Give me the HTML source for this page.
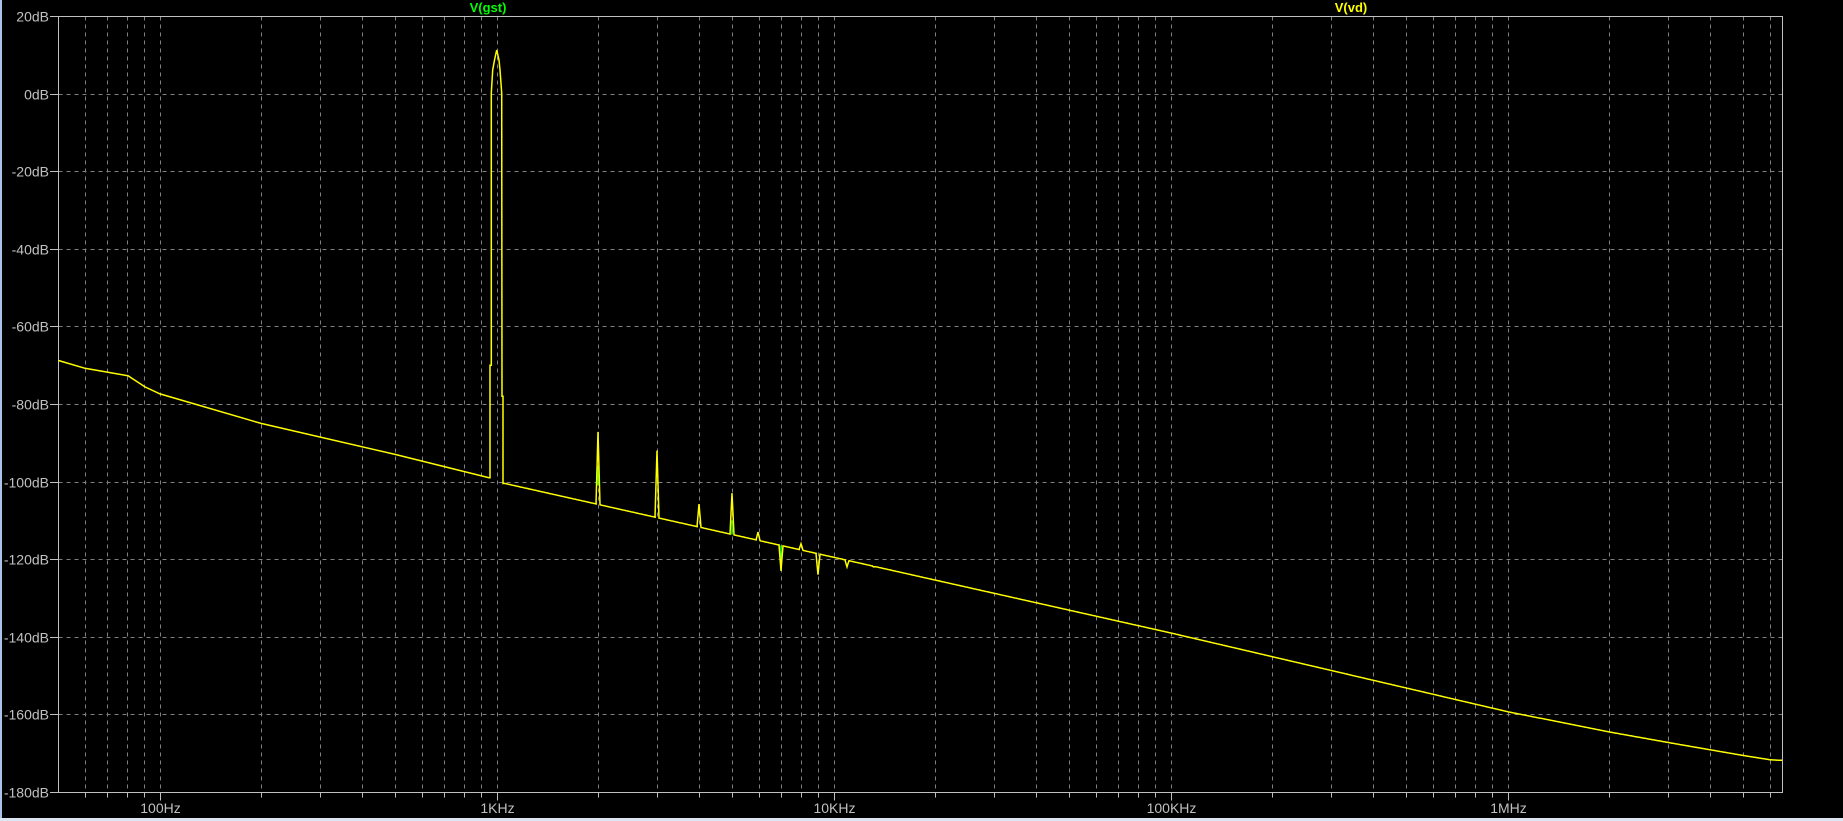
<!DOCTYPE html>
<html><head><meta charset="utf-8"><style>
html,body{margin:0;padding:0;background:#000;width:1843px;height:821px;overflow:hidden}
svg{display:block}
text{font-family:"Liberation Sans",sans-serif;font-size:14px;fill:#c0c0c0}
</style></head><body>
<svg id="s" width="1843" height="821" xmlns="http://www.w3.org/2000/svg">
<rect x="0" y="0" width="1843" height="821" fill="#000"/>
<rect x="0" y="0" width="2" height="821" fill="#a9c4e6"/>
<rect x="0" y="818" width="1843" height="3" fill="#dce6f2"/>
<g id="grid"></g>
<rect x="58.5" y="16.5" width="1724" height="776" fill="none" stroke="#c0c0c0" stroke-width="1"/>
<g id="lab"></g>
<text x="488" y="12" text-anchor="middle" style="fill:#00ff00;font-weight:bold;font-size:13px">V(gst)</text>
<text x="1351" y="12" text-anchor="middle" style="fill:#ffff00;font-weight:bold;font-size:13px">V(vd)</text>
<path id="g2" fill="none" stroke="#00ff00" stroke-width="1.5"/>
<path id="tr" fill="none" stroke="#ffff00" stroke-width="1.5"/>
</svg>
<script>
var L=58.5,R=1782.5,T=16.5,B=792.5;
function X(f){return 159.6+337*Math.log10(f/100);}
function Y(d){return 16+(20-d)*3.88;}
var g='',lab='';
for(var e=1;e<=6;e++){for(var m=1;m<=9;m++){var f=m*Math.pow(10,e);var x=Math.round(X(f))+0.5;if(x<=L||x>=R)continue;
g+='<line x1="'+x+'" y1="'+T+'" x2="'+x+'" y2="'+B+'" stroke="#808080" stroke-dasharray="4,4"/>';
g+='<line x1="'+x+'" y1="'+B+'" x2="'+x+'" y2="'+(B+(m==1?8:5))+'" stroke="#c0c0c0"/>';
if(m==1){var n=['','','100Hz','1KHz','10KHz','100KHz','1MHz'][e];lab+='<text x="'+x+'" y="813" text-anchor="middle">'+n+'</text>';}}}
for(var d=20;d>=-180;d-=20){var y=Math.round(Y(d))+0.5;
if(d<20&&d>-180)g+='<line x1="'+L+'" y1="'+y+'" x2="'+R+'" y2="'+y+'" stroke="#808080" stroke-dasharray="4,4"/>';
g+='<line x1="50" y1="'+y+'" x2="'+L+'" y2="'+y+'" stroke="#c0c0c0"/>';
lab+='<text x="49" y="'+(y+5)+'" text-anchor="end">'+d+'dB</text>';}
document.getElementById('grid').innerHTML=g;document.getElementById('lab').innerHTML=lab;
var pts=[[58.5,-68.8],[85,-70.8],[128,-72.7],[145,-75.6],[160,-77.4],[261,-85],[395,-93],[489,-99]];
var tab=[[3,-100],[4,-119.5],[5,-139],[6,-159.3],[6.3,-164.5],[6.5,-167.6],[6.7,-170.6],[6.78,-171.7],[6.9,-172.2]];
function base(x){
 var lf=2+(x-159.6)/337;
 for(var i=0;i<tab.length-1;i++){if(lf<=tab[i+1][0]){var a=tab[i],b=tab[i+1];return a[1]+(b[1]-a[1])*(lf-a[0])/(b[0]-a[0]);}}
 return tab[tab.length-1][1];}
var p='M'+pts.map(function(q){return q[0]+','+Y(q[1]).toFixed(1)}).join(' L');
p+=' L490,'+Y(-99)+' L490,'+Y(-70)+' L491.3,'+Y(-70)+' L491.3,93 L492.7,70 L494.5,60 L496.7,50 L499,60 L500,70 L501.7,93 L502,'+Y(-78)+' L503,'+Y(-78)+' L503,'+Y(-100.5);
var spikes={598:-87.2,657:-92,699:-105.8,732:-103,758:-113,781:-123,801:-116,818:-124,847:-122,874:-122};
for(var x=504;x<=1782;x+=1){
 var d=base(x);
 var s=spikes[x];
 if(s!==undefined){p+=' L'+(x-2)+','+Y(base(x-2)).toFixed(1)+' L'+(x-1)+','+Y((base(x)+s)/2).toFixed(1)+' L'+x+','+Y(s).toFixed(1)+' L'+(x+1)+','+Y((base(x)+s)/2).toFixed(1)+' L'+(x+2)+','+Y(base(x+2)).toFixed(1);x+=2;continue;}
 p+=' L'+x+','+Y(d).toFixed(1);}
document.getElementById('tr').setAttribute('d',p);
document.getElementById('g2').setAttribute('d','M781,'+Y(base(781))+' L781,'+Y(-123)+' M732,'+Y(base(732))+' L732,'+Y(-110)+' M598,'+Y(-96)+' L598,'+Y(-101));
</script>
</body></html>
